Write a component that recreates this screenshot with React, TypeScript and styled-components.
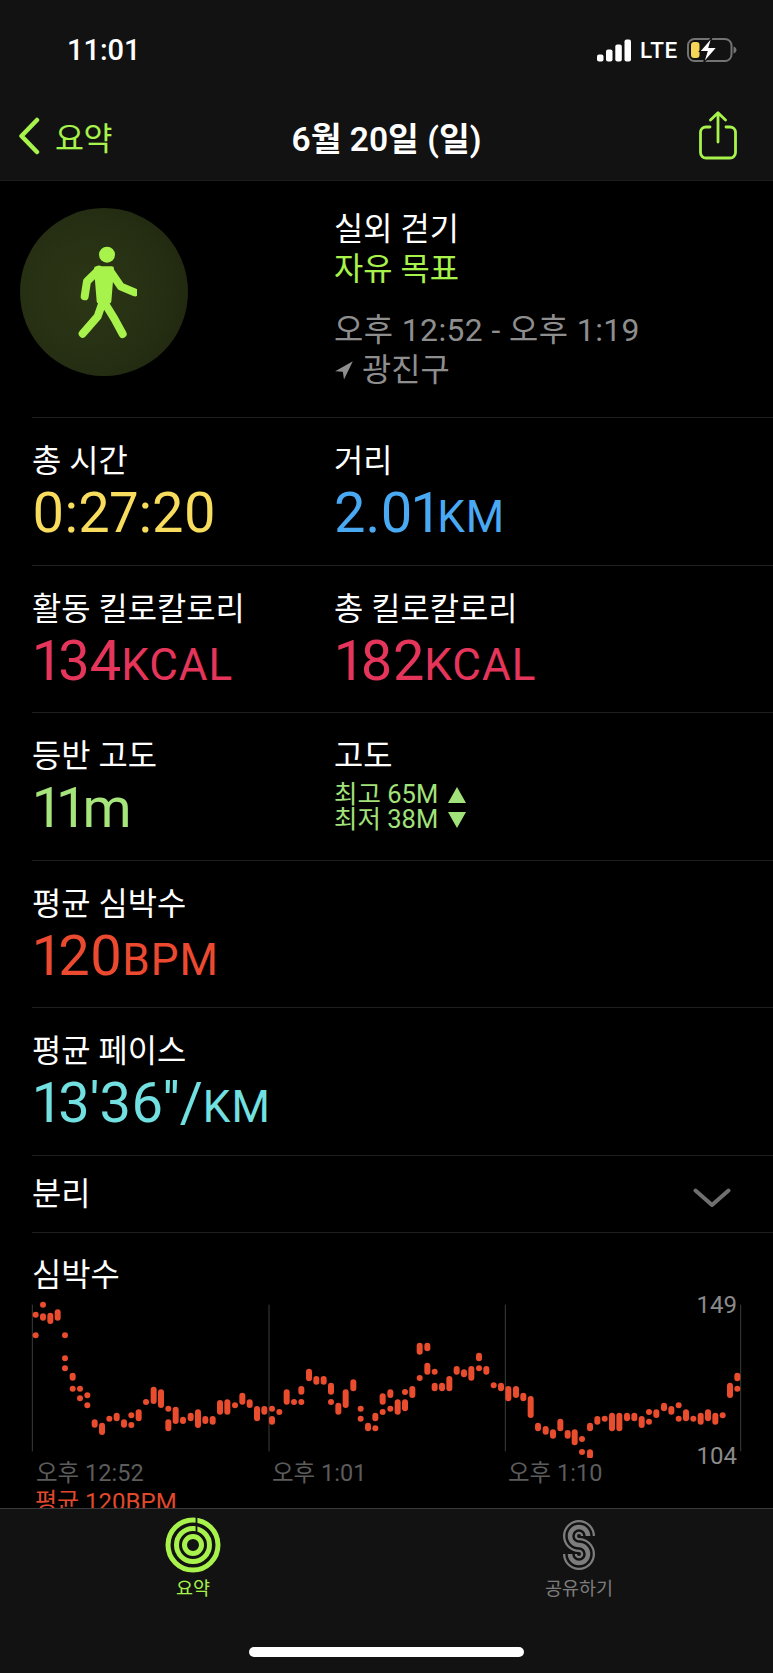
import React from "react";
import styled, { createGlobalStyle } from "styled-components";

const GlobalStyle = createGlobalStyle`
  html, body {
    margin: 0;
    padding: 0;
    background: #000;
  }
  body {
    font-family: Roboto, "Noto Sans CJK KR", sans-serif;
    color: #fff;
  }
`;

const LIME = "#a8f24c";

const Phone = styled.div`
  width: 773px;
  height: 1673px;
  display: flex;
  flex-direction: column;
  overflow: hidden;
  background: #000;
`;

const TopBar = styled.header`
  height: 181px;
  flex: none;
  box-sizing: border-box;
  background: #121212;
  border-bottom: 1px solid #1d1d1d;
`;

const StatusBar = styled.div`
  height: 92px;
  display: flex;
  align-items: center;
  justify-content: space-between;
  padding: 8px 36px 0 67px;
  box-sizing: border-box;
`;

const Clock = styled.span`
  font-size: 29px;
  font-weight: 500;
  line-height: 1;
`;

const StatusRight = styled.div`
  display: flex;
  align-items: center;
`;

const Lte = styled.span`
  font-size: 22.5px;
  font-weight: 500;
  margin: 0 9px 0 8px;
  letter-spacing: 0.7px;
`;

const NavBar = styled.nav`
  height: 88px;
  display: grid;
  grid-template-columns: 1fr auto 1fr;
  align-items: center;
  padding: 0 36px;
`;

const BackLink = styled.a`
  display: flex;
  align-items: center;
  gap: 15px;
  margin-left: -18px;
  color: ${LIME};
  font-size: 31.5px;
  letter-spacing: -0.5px;
`;

const NavTitle = styled.h1`
  margin: 0;
  font-size: 33.5px;
  font-weight: 600;
`;

const ShareButton = styled.button`
  justify-self: end;
  padding: 0 0 2px;
  border: 0;
  background: none;
  display: flex;
`;

const Content = styled.main`
  flex: 1;
  min-height: 0;
  overflow: hidden;
`;

const Summary = styled.section`
  height: 236px;
  box-sizing: border-box;
  display: grid;
  grid-template-columns: 314px 1fr;
  padding: 27px 0 0 20px;
`;

const Badge = styled.div`
  width: 168px;
  height: 168px;
  border-radius: 50%;
  background: radial-gradient(circle at 40% 50%, #2c3716 0%, #252e12 60%, #1c230e 100%);
  display: flex;
  align-items: center;
  justify-content: center;
`;

const SummaryText = styled.div`
  padding-top: 1px;
`;

const SummaryLine = styled.div<{ $color?: string }>`
  font-size: 31.8px;
  line-height: 40px;
  color: ${(p) => p.$color || "#fff"};
  display: flex;
  align-items: center;
  gap: 8px;
`;

const TimeRange = styled(SummaryLine)`
  margin-top: 21px;
  letter-spacing: 0.45px;
`;

const Metric = styled.section`
  box-sizing: border-box;
  height: 147.6px;
  margin-left: 32px;
  border-top: 1px solid #1f1f1f;
  display: grid;
  grid-template-columns: 302px 1fr;
  padding-top: 23px;
`;

const Label = styled.div`
  font-size: 31.8px;
  line-height: 40px;
`;

const Value = styled.div<{ $color: string; $inset?: number }>`
  color: ${(p) => p.$color};
  font-size: 56px;
  line-height: 64px;
  font-weight: 400;
  font-feature-settings: "pnum" 1;
  padding-left: ${(p) => p.$inset || 0}px;
`;

const Unit = styled.span`
  font-size: 44px;
  letter-spacing: 1px;
`;

const ElevationLine = styled.div`
  color: #a2e27a;
  font-size: 25.5px;
  line-height: 25px;
  display: flex;
  align-items: center;
  gap: 10px;
  ${Label} + & {
    margin-top: 6px;
  }
`;

const Triangle = styled.span<{ $down?: boolean }>`
  width: 0;
  height: 0;
  border-left: 9px solid transparent;
  border-right: 9px solid transparent;
  border-${(p) => (p.$down ? "top" : "bottom")}: 16px solid #a2e27a;
`;

const SplitRow = styled.section`
  box-sizing: border-box;
  height: 78px;
  margin-left: 32px;
  padding-right: 42px;
  border-top: 1px solid #1f1f1f;
  border-bottom: 1px solid #1f1f1f;
  display: flex;
  align-items: center;
  justify-content: space-between;
`;

const ChevronSlot = styled.div`
  display: flex;
  padding-top: 8px;
`;

const HeartSection = styled.section`
  padding-top: 22px;
`;

const HeartTitle = styled.div`
  font-size: 31.8px;
  line-height: 40px;
  padding-left: 32px;
`;

const ChartWrap = styled.div`
  position: relative;
  height: 163px;
`;

const ChartSvg = styled.svg`
  display: block;
`;

const AxisLabel = styled.span<{ $top: number }>`
  position: absolute;
  right: 36px;
  top: ${(p) => p.$top}px;
  font-size: 24px;
  line-height: 28px;
  color: #8a8a8a;
`;

const TimeAxis = styled.div`
  display: grid;
  grid-template-columns: repeat(3, 236px);
  padding-left: 36px;
  font-size: 23.5px;
  line-height: 30px;
  color: #5c5c5c;
`;

const Average = styled.div`
  padding: 0 0 0 35px;
  font-size: 24px;
  line-height: 28px;
  color: #e0492c;
`;

const TabBar = styled.footer`
  height: 165px;
  flex: none;
  box-sizing: border-box;
  background: #121212;
  border-top: 1px solid #3a3a3a;
  display: grid;
  grid-template-columns: 386px 1fr;
  position: relative;
`;

const Tab = styled.div<{ $color: string; $center: number }>`
  width: 120px;
  margin-left: ${(p) => p.$center - 60}px;
  display: flex;
  flex-direction: column;
  align-items: center;
  padding-top: 8px;
  color: ${(p) => p.$color};
  font-size: 18.5px;
  line-height: 26px;
`;

const TabIcon = styled.svg`
  display: block;
  margin-bottom: 3px;
`;

const HomeIndicator = styled.div`
  position: absolute;
  left: 249px;
  bottom: 16px;
  width: 275px;
  height: 10px;
  border-radius: 5px;
  background: #fff;
`;

// heart rate readings traced off the chart: [x, top, bottom] in 1/3 px
const READINGS: number[][] = [
  [107, 164, 164], [107, 226, 226], [129, 134, 134], [129, 160, 182], [151, 158, 192], [173, 148, 182],
  [195, 226, 226], [195, 295, 295], [195, 325, 325], [218, 338, 362], [218, 386, 386], [240, 386, 386],
  [240, 415, 415], [262, 406, 406], [262, 436, 436], [284, 478, 503], [306, 488, 525], [328, 476, 476],
  [350, 458, 484], [372, 478, 503], [394, 466, 466], [394, 495, 495], [416, 448, 484], [438, 426, 426],
  [461, 380, 432], [483, 388, 444], [505, 446, 446], [505, 478, 514], [527, 440, 492], [549, 470, 492],
  [572, 458, 484], [594, 448, 504], [616, 468, 492], [638, 468, 494], [660, 420, 464], [682, 418, 464],
  [705, 436, 436], [727, 398, 434], [749, 418, 444], [771, 438, 484], [793, 438, 464], [816, 446, 446],
  [816, 468, 494], [838, 456, 456], [860, 388, 434], [882, 426, 426], [904, 378, 404], [904, 426, 426],
  [927, 326, 364], [949, 348, 374], [971, 348, 374], [993, 368, 404], [993, 426, 426], [1015, 428, 464],
  [1037, 388, 444], [1060, 358, 394], [1082, 446, 446], [1082, 476, 476], [1104, 488, 514], [1126, 505, 505],
  [1126, 458, 484], [1148, 400, 434], [1148, 456, 456], [1171, 388, 414], [1171, 446, 446], [1193, 418, 464],
  [1215, 396, 396], [1215, 418, 454], [1237, 378, 414], [1259, 248, 284], [1259, 354, 354], [1282, 248, 274],
  [1282, 308, 344], [1304, 335, 335], [1304, 368, 394], [1326, 368, 394], [1348, 348, 394], [1370, 318, 344],
  [1392, 328, 352], [1414, 318, 362], [1437, 278, 304], [1437, 325, 325], [1459, 318, 344], [1481, 376, 376],
  [1503, 368, 394], [1525, 378, 424], [1548, 378, 414], [1570, 398, 424], [1592, 408, 474], [1614, 488, 514],
  [1637, 498, 524], [1659, 508, 536], [1681, 476, 514], [1703, 510, 536], [1724, 508, 556], [1746, 537, 537],
  [1746, 576, 576], [1770, 568, 596], [1770, 488, 514], [1792, 468, 494], [1814, 476, 476], [1836, 458, 514],
  [1858, 458, 514], [1881, 458, 484], [1903, 458, 484], [1925, 468, 504], [1947, 456, 456], [1947, 485, 485],
  [1969, 448, 474], [1992, 428, 454], [2014, 438, 464], [2036, 436, 436], [2036, 476, 476], [2058, 448, 484],
  [2080, 476, 476], [2102, 458, 494], [2124, 448, 484], [2146, 458, 494], [2168, 466, 466], [2190, 368, 414],
  [2212, 338, 364], [2212, 386, 386],
];

const GRID_X = [97, 807, 1516, 2222];

const HeartChart = () => (
  <ChartSvg width={773} height={163} viewBox="0 105 2319 489">
    {GRID_X.map((x) => (
      <line key={x} x1={x} x2={x} y1={134} y2={574} stroke="#3c3c3c" strokeWidth={3} />
    ))}
    {READINGS.map(([x, top, bottom], i) => (
      <line
        key={i}
        x1={x}
        x2={x}
        y1={top === bottom ? top : top + 9}
        y2={top === bottom ? bottom + 0.1 : bottom - 9}
        stroke="#ea4c2e"
        strokeWidth={18}
        strokeLinecap="round"
      />
    ))}
  </ChartSvg>
);

const SignalIcon = () => (
  <svg width={35} height={23} viewBox="0 0 35 23">
    <rect x={0} y={15.5} width={6.5} height={7} rx={2} fill="#fff" />
    <rect x={9} y={10.5} width={6.5} height={12} rx={2} fill="#fff" />
    <rect x={18.3} y={5.5} width={6.5} height={17} rx={2} fill="#fff" />
    <rect x={27.5} y={0.5} width={6.5} height={22} rx={2} fill="#fff" />
  </svg>
);

const BatteryIcon = () => (
  <svg width={50} height={26} viewBox="0 0 50 26">
    <rect x={1} y={2} width={43.5} height={22} rx={6.5} fill="none" stroke="#737373" strokeWidth={2} />
    <rect x={4} y={5} width={8.5} height={16} rx={3} fill="#f5d656" />
    <path d="M46.5 9.5c2 .6 3 2 3 3.5s-1 2.9-3 3.5z" fill="#737373" />
    <path d="M25 0 12.5 14.5H20L16.5 26 30 10.5h-8z" fill="#fff" stroke="#121212" strokeWidth={1.2} />
  </svg>
);

const BackIcon = () => (
  <svg width={22} height={38} viewBox="0 0 22 38">
    <path d="M19 3 3.5 19 19 35" fill="none" stroke={LIME} strokeWidth={4.5} strokeLinecap="round" strokeLinejoin="round" />
  </svg>
);

const ShareIcon = () => (
  <svg width={38} height={49} viewBox="0 0 38 49" fill="none" stroke={LIME} strokeWidth={2.8} strokeLinecap="round" strokeLinejoin="round">
    <path d="M11 16H7a5.5 5.5 0 0 0-5.5 5.5v20A5.5 5.5 0 0 0 7 47h24a5.5 5.5 0 0 0 5.5-5.5v-20A5.5 5.5 0 0 0 31 16h-4" />
    <path d="M19 31V2M11.5 9 19 1.8 26.5 9" />
  </svg>
);

const WalkerIcon = () => (
  <svg width={66.7} height={100} viewBox="152 62 200 300" fill="none" stroke={LIME} strokeWidth={24} strokeLinecap="round" strokeLinejoin="round">
    <circle cx={260} cy={100} r={24} fill={LIME} stroke="none" />
    <path d="M236 145 200 180 193 225" />
    <path d="M270 150 302 196 343 213" />
    <path d="M228 142H274L266 240 236 240Z" fill={LIME} strokeWidth={14} />
    <path d="M246 245 232 285 187 337" />
    <path d="M256 250 282 292 307 338" />
  </svg>
);

const LocationIcon = () => (
  <svg width={20} height={20} viewBox="0 0 17 17">
    <path d="M16 1 1 9.5 7.5 10 8.5 16.5z" fill="#8e8e8e" />
  </svg>
);

const RingsIcon = () => (
  <TabIcon width={56} height={56} viewBox="-28 -28 56 56" fill="none" stroke={LIME}>
    <circle r={25} strokeWidth={5} />
    <circle r={16.5} strokeWidth={5} />
    <circle r={8.5} strokeWidth={5} />
    <path d="M3.5 -28V-11" stroke="#121212" strokeWidth={1.8} />
  </TabIcon>
);

const SHARE_PATH = "M9 -9A9 9 0 1 0 0 0A9 9 0 1 1 -9 9";

const SharingIcon = () => (
  <TabIcon width={56} height={56} viewBox="-28 -28 56 56" fill="none">
    <path d={SHARE_PATH} stroke="#7d7d7d" strokeWidth={14} />
    <path d={SHARE_PATH} stroke="#121212" strokeWidth={9.5} />
    <path d={SHARE_PATH} stroke="#7d7d7d" strokeWidth={4.5} />
  </TabIcon>
);

const ChevronIcon = () => (
  <svg width={38} height={20} viewBox="0 0 38 20">
    <path d="M2.5 2.5 19 17 35.5 2.5" fill="none" stroke="#6f6f6f" strokeWidth={4} strokeLinecap="round" strokeLinejoin="round" />
  </svg>
);

export default function App() {
  return (
    <Phone>
      <GlobalStyle />
      <TopBar>
        <StatusBar>
          <Clock>11:01</Clock>
          <StatusRight>
            <SignalIcon />
            <Lte>LTE</Lte>
            <BatteryIcon />
          </StatusRight>
        </StatusBar>
        <NavBar>
          <BackLink>
            <BackIcon />
            요약
          </BackLink>
          <NavTitle>6월 20일 (일)</NavTitle>
          <ShareButton>
            <ShareIcon />
          </ShareButton>
        </NavBar>
      </TopBar>

      <Content>
        <Summary>
          <Badge>
            <WalkerIcon />
          </Badge>
          <SummaryText>
            <SummaryLine>실외 걷기</SummaryLine>
            <SummaryLine $color={LIME}>자유 목표</SummaryLine>
            <TimeRange $color="#8e8e8e">오후 12:52 - 오후 1:19</TimeRange>
            <SummaryLine $color="#8e8e8e">
              <LocationIcon />
              광진구
            </SummaryLine>
          </SummaryText>
        </Summary>

        <Metric>
          <div>
            <Label>총 시간</Label>
            <Value $color="#f7dc5d">0:27:20</Value>
          </div>
          <div>
            <Label>거리</Label>
            <Value $color="#4aa9f3">2.01<Unit>KM</Unit></Value>
          </div>
        </Metric>
        <Metric>
          <div>
            <Label>활동 킬로칼로리</Label>
            <Value $color="#e5355b" $inset={2}>134<Unit>KCAL</Unit></Value>
          </div>
          <div>
            <Label>총 킬로칼로리</Label>
            <Value $color="#e5355b" $inset={2}>182<Unit>KCAL</Unit></Value>
          </div>
        </Metric>
        <Metric>
          <div>
            <Label>등반 고도</Label>
            <Value $color="#a6e57c" $inset={2}>11m</Value>
          </div>
          <div>
            <Label>고도</Label>
            <ElevationLine>최고 65M <Triangle /></ElevationLine>
            <ElevationLine>최저 38M <Triangle $down /></ElevationLine>
          </div>
        </Metric>
        <Metric>
          <div>
            <Label>평균 심박수</Label>
            <Value $color="#ec4a30" $inset={2}>120<Unit>BPM</Unit></Value>
          </div>
        </Metric>
        <Metric>
          <div>
            <Label>평균 페이스</Label>
            <Value $color="#72e0e0" $inset={2}>13'36''/<Unit>KM</Unit></Value>
          </div>
        </Metric>

        <SplitRow>
          <Label>분리</Label>
          <ChevronSlot>
            <ChevronIcon />
          </ChevronSlot>
        </SplitRow>

        <HeartSection>
          <HeartTitle>심박수</HeartTitle>
          <ChartWrap>
            <HeartChart />
            <AxisLabel $top={-4}>149</AxisLabel>
            <AxisLabel $top={147}>104</AxisLabel>
          </ChartWrap>
          <TimeAxis>
            <span>오후 12:52</span>
            <span>오후 1:01</span>
            <span>오후 1:10</span>
          </TimeAxis>
          <Average>평균 120BPM</Average>
        </HeartSection>
      </Content>

      <TabBar>
        <Tab $color={LIME} $center={193}>
          <RingsIcon />
          요약
        </Tab>
        <Tab $color="#7d7d7d" $center={193}>
          <SharingIcon />
          공유하기
        </Tab>
        <HomeIndicator />
      </TabBar>
    </Phone>
  );
}
